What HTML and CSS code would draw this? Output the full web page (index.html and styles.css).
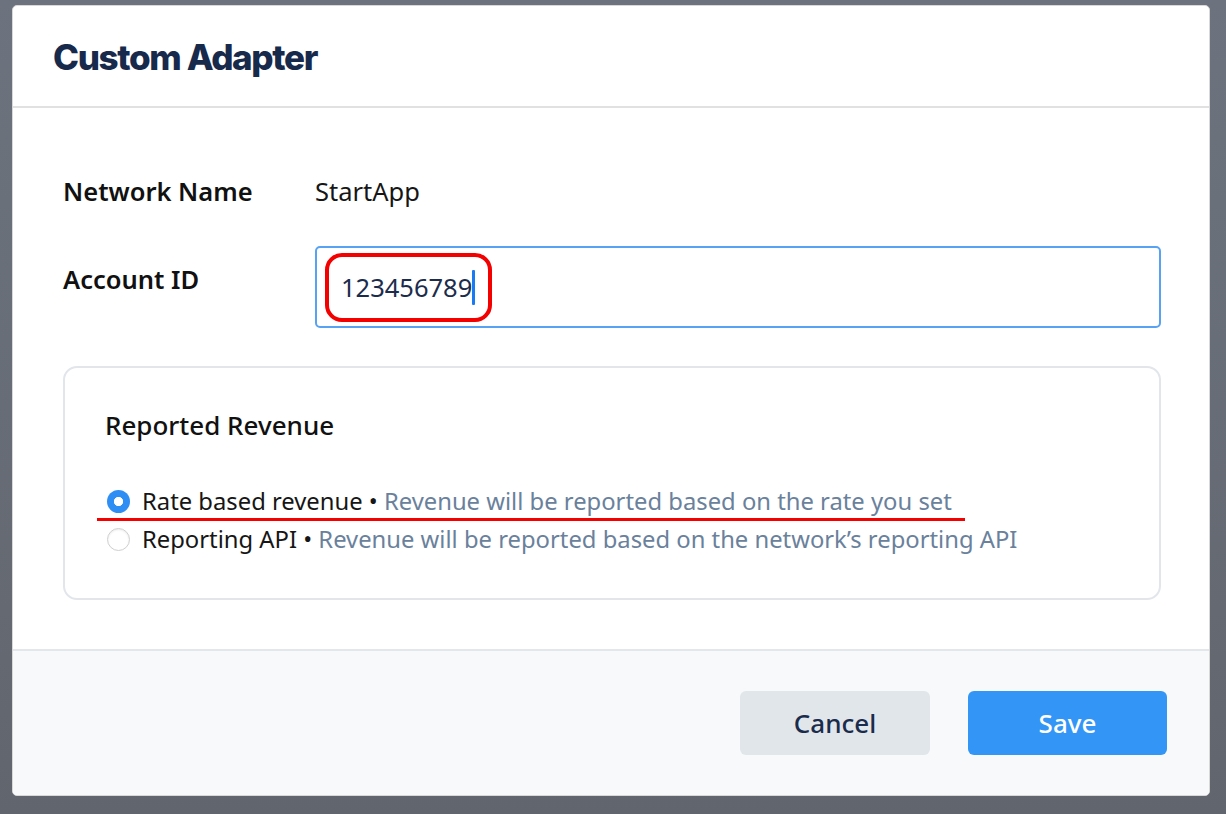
FILE: index.html
```html
<!DOCTYPE html>
<html lang="en">
<head>
<meta charset="utf-8">
<title>Custom Adapter</title>
<link rel="stylesheet" href="styles.css">
</head>
<body>
<div class="modal">
  <header class="modal-header">
    <h1 class="modal-title">Custom Adapter</h1>
  </header>
  <main class="modal-body">
    <div class="row row-static">
      <div class="label">Network Name</div>
      <div class="value">StartApp</div>
    </div>
    <div class="row row-input">
      <div class="label label-input">Account ID</div>
      <div class="field">
        <span class="field-text">123456789</span><span class="caret"></span>
        <span class="mark-ring"></span>
      </div>
    </div>
    <section class="revenue-box">
      <div class="box-title">Reported Revenue</div>
      <div class="options">
        <div class="option">
          <span class="radio radio-checked"></span>
          <span class="opt-name">Rate based revenue •&nbsp;</span>
          <span class="opt-desc">Revenue will be reported based on the rate you set</span>
        </div>
        <div class="option">
          <span class="radio"></span>
          <span class="opt-name">Reporting API •&nbsp;</span>
          <span class="opt-desc">Revenue will be reported based on the network’s reporting API</span>
        </div>
      </div>
      <span class="mark-line"></span>
    </section>
  </main>
  <footer class="modal-footer">
    <button class="btn btn-cancel">Cancel</button>
    <button class="btn btn-save">Save</button>
  </footer>
</div>
</body>
</html>
```

FILE: styles.css
```css
* { box-sizing: border-box; }

html, body {
  margin: 0;
  height: 100%;
}

body {
  background: linear-gradient(#6d737e, #61666e);
  padding: 5px 16px 18px 12px;
  font-family: "Noto Sans", "Open Sans", sans-serif;
  color: #161616;
}

.modal {
  width: 1198px;
  height: 791px;
  background: #fff;
  border: 1px solid #d8d8d8;
  border-radius: 5px;
  display: flex;
  flex-direction: column;
  overflow: hidden;
}

.modal-header {
  height: 102px;
  border-bottom: 2px solid #e1e1e1;
  padding: 33px 0 0 40px;
}

.modal-title {
  margin: 0;
  font-family: Inter, "Liberation Sans", sans-serif;
  font-weight: 800;
  font-size: 35px;
  line-height: 36px;
  letter-spacing: -1.35px;
  color: #172a4b;
}

.modal-body {
  flex: 1;
  padding: 67px 48px 0 50px;
}

.row {
  display: flex;
  align-items: flex-start;
}

.label {
  width: 252px;
  flex: none;
  font-size: 25.5px;
  line-height: 32px;
  font-weight: 600;
  color: #111;
}

.label-input { padding-top: 17px; }

.value {
  font-size: 25.5px;
  line-height: 32px;
  color: #161616;
}

.row-input { margin-top: 39px; }

.field {
  position: relative;
  flex: 1;
  height: 82px;
  border: 2px solid #58a2f3;
  border-radius: 5px;
  display: flex;
  align-items: center;
  padding-left: 24px;
}

.field-text {
  font-size: 25.5px;
  line-height: 32px;
  color: #1c2c4c;
}

.caret {
  width: 3px;
  height: 35px;
  background: #1a7af2;
  margin-left: 0;
  border-radius: 1px;
}

.mark-ring {
  position: absolute;
  left: 8px;
  top: 5px;
  width: 167px;
  height: 69px;
  border: 4px solid #f30000;
  border-radius: 17px;
}

.revenue-box {
  position: relative;
  margin-top: 38px;
  height: 234px;
  border: 2px solid #e2e6eb;
  border-radius: 14px;
  padding: 38px 40px 0 40px;
}

.box-title {
  font-size: 26px;
  line-height: 38px;
  font-weight: 500;
  color: #111;
}

.options {
  margin-top: 38px;
  display: flex;
  flex-direction: column;
}

.option {
  display: flex;
  align-items: center;
  font-size: 23.8px;
  line-height: 38px;
  white-space: pre;
}

.radio {
  width: 23px;
  height: 23px;
  border-radius: 50%;
  margin: 0 12px 0 2px;
  flex: none;
  border: 1px solid #cfcfcf;
  background: #fff;
  box-shadow: inset 0 1px 2px rgba(0,0,0,0.08);
}

.radio-checked {
  border: none;
  background: radial-gradient(circle, #fff 0 4.3px, #2f8ef4 5px);
  box-shadow: none;
}

.opt-name { color: #161616; }

.opt-desc { color: #6a819c; }

.mark-line {
  position: absolute;
  left: 32px;
  top: 150px;
  width: 868px;
  height: 3px;
  background: #f30000;
}

.modal-footer {
  height: 146px;
  flex: none;
  background: #f8f9fb;
  border-top: 2px solid #e3e7ec;
  display: flex;
  align-items: center;
  justify-content: flex-end;
  gap: 38px;
  padding-right: 42px;
}

.btn {
  height: 64px;
  border: none;
  border-radius: 6px;
  font-family: "Noto Sans", "Open Sans", sans-serif;
  font-size: 26px;
  font-weight: 500;
  cursor: pointer;
}

.btn-cancel {
  width: 190px;
  background: #e1e6ea;
  color: #1b2b4b;
}

.btn-save {
  width: 199px;
  background: #3395f6;
  color: #fff;
}
```
